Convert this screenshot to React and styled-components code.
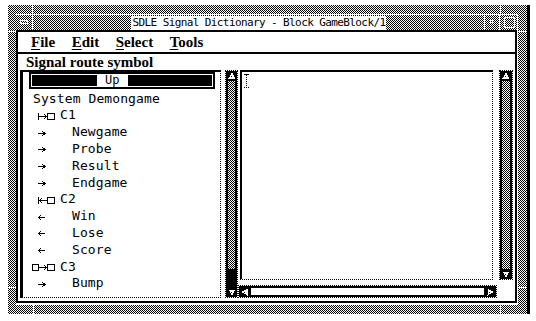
import React from 'react';
import styled, { createGlobalStyle } from 'styled-components';

const dither = `repeating-conic-gradient(#000 0% 25%, #fff 0% 50%) 0 0 / 2px 2px`;

const Global = createGlobalStyle`
  html, body { margin: 0; padding: 0; background: #fff; }
  body { width: 536px; height: 321px; overflow: hidden; }
  * { box-sizing: border-box; }
`;

const Page = styled.div`
  padding: 5px 0 0 8px;
`;

const Window = styled.div`
  position: relative;
  width: 522px;
  height: 309px;
  background: ${dither};
  border-right: 3px solid #000;
  padding: 9px 9px 9px 8px;
  display: flex;
`;

const Mark = styled.span`
  position: absolute;
  background: #fff;
  left: ${p => p.$x}px;
  top: ${p => p.$y}px;
  width: ${p => p.$w}px;
  height: ${p => p.$h}px;
`;

const Inner = styled.div`
  flex: 1;
  display: flex;
  flex-direction: column;
  background: #fff;
`;

const TitleBar = styled.div`
  height: 18px;
  margin-right: 1px;
  border-top: 1px solid #fff;
  border-bottom: 2px solid #000;
  background: ${dither};
  display: flex;
`;

const TitleButton = styled.div`
  position: relative;
  width: ${p => p.$w}px;
  border-left: ${p => (p.$left ? '1px solid #fff' : 'none')};
  border-right: ${p => (p.$right ? '1px solid #fff' : 'none')};
  display: flex;
  align-items: flex-start;
  justify-content: flex-start;
`;

const TitleArea = styled.div`
  flex: 1;
  display: flex;
  justify-content: center;
  align-items: flex-end;
`;

const TitleText = styled.span`
  background: #fff;
  font-family: "DejaVu Sans Mono", monospace;
  font-size: 11px;
  letter-spacing: -0.6px;
  line-height: 14px;
  height: 14px;
  padding: 0 1px 0 2px;
  color: #000;
  white-space: pre;
`;

const Main = styled.div`
  flex: 1;
  display: flex;
  flex-direction: column;
  border-left: 2px solid #000;
  border-right: 2px solid #000;
  border-bottom: 2px solid #000;
  margin: 0 1px 2px 0;
  padding-bottom: 3px;
`;

const MenuBar = styled.div`
  height: 22px;
  border-bottom: 2px solid #000;
  padding: 1px 0 0 13px;
  display: flex;
  gap: 16.5px;
  font-family: "Liberation Serif", "Times New Roman", serif;
  font-weight: bold;
  font-size: 15px;
  line-height: 19px;
  color: #000;
`;

const MenuItem = styled.span`
  u { text-decoration-thickness: 1px; text-underline-offset: 2px; }
`;

const Label = styled.div`
  height: 16px;
  padding-left: 8px;
  font-family: "Liberation Serif", "Times New Roman", serif;
  font-weight: bold;
  font-size: 15px;
  line-height: 16px;
  color: #000;
`;

const ContentRow = styled.div`
  height: 228px;
  padding-left: 2px;
  display: flex;
`;

const ListBox = styled.div`
  width: 201px;
  height: 228px;
  border-top: 2px solid #000;
  border-left: 3px solid #000;
  border-right: 1px dotted #000;
  border-bottom: 1px dotted #000;
  overflow: hidden;
  display: flex;
  flex-direction: column;
`;

const UpButton = styled.div`
  height: 17px;
  margin: 0 5px 0 6px;
  border: 2px solid #000;
  padding: 1px;
  background: #fff;
  flex: none;
`;

const UpBar = styled.div`
  height: 100%;
  background: #000;
  display: flex;
  align-items: stretch;
`;

const UpLabel = styled.span`
  margin-left: 65px;
  background: #fff;
  padding: 0 9px 0 8px;
  font-family: "DejaVu Sans Mono", monospace;
  font-size: 12px;
  line-height: 11px;
  color: #000;
`;

const Rows = styled.div`
  padding-top: 1.6px;
  display: flex;
  flex-direction: column;
`;

const Row = styled.div`
  height: 16.8px;
  display: flex;
  align-items: center;
  padding-left: ${p => p.$indent}px;
  font-family: "DejaVu Sans Mono", monospace;
  font-size: 13px;
  line-height: 16.8px;
  letter-spacing: 0.1px;
  color: #000;
  white-space: pre;
`;

const RowIcon = styled.svg`
  flex: none;
  margin-right: ${p => p.$gap}px;
  margin-top: 1px;
`;

const VScroll = styled.div`
  width: ${p => p.$w}px;
  height: ${p => p.$h}px;
  margin-left: ${p => p.$ml}px;
  border: 1px dotted #000;
  display: flex;
  flex-direction: column;
  flex: none;
`;

const HScroll = styled.div`
  width: 259px;
  height: 13px;
  margin: 5px 0 0 -2px;
  border: 1px dotted #000;
  display: flex;
`;

const ArrowBox = styled.div`
  flex: none;
  width: ${p => p.$w || 'auto'};
  height: ${p => p.$h || 'auto'};
  background: #000;
  display: flex;
  align-items: center;
  justify-content: center;
`;

const VTrack = styled.div`
  flex: 1;
  border-left: 2px solid #000;
  border-right: 2px solid #000;
  background: ${dither};
`;

const HTrack = styled.div`
  flex: 1;
  border-top: 2px solid #000;
  border-bottom: 2px solid #000;
  background: #fff;
`;

const Thumb = styled.div`
  flex: none;
  height: ${p => p.$h}px;
  background: #000;
`;

const RightPane = styled.div`
  width: 273px;
  margin-left: 2px;
  display: flex;
  flex-direction: column;
`;

const TopRow = styled.div`
  height: 210px;
  display: flex;
`;

const TextArea = styled.div`
  width: 253px;
  height: 210px;
  border-top: 2px solid #000;
  border-left: 2px solid #000;
  border-right: 1px dotted #000;
  border-bottom: 1px dotted #000;
  background: #fff;
  padding: 2px 0 0 2px;
`;

const Arrow = ({ dir }) => {
  const pts = {
    up: '5,1.5 8.5,7.5 1.5,7.5',
    down: '1.5,2.5 8.5,2.5 5,8.5',
    left: '1.5,5 7.5,1.5 7.5,8.5',
    right: '8.5,5 2.5,1.5 2.5,8.5',
  }[dir];
  return (
    <svg width="10" height="10" viewBox="0 0 10 10" shapeRendering="crispEdges">
      <polygon points={pts} fill="#fff" />
      <rect x="4" y="5" width="1" height="1" fill="#000" />
    </svg>
  );
};

const SigArrow = ({ dir }) => (
  <RowIcon $gap={26} width="8" height="7" viewBox="0 0 8 7" shapeRendering="crispEdges">
    <line x1="0" y1="3.5" x2="7" y2="3.5" stroke="#000" strokeWidth="1" />
    {dir === 'right' ? (
      <polyline points="4,1 7,3.5 4,6" fill="none" stroke="#000" strokeWidth="1" />
    ) : (
      <polyline points="3,1 0.5,3.5 3,6" fill="none" stroke="#000" strokeWidth="1" />
    )}
  </RowIcon>
);

const ChanIcon = ({ kind }) => (
  <RowIcon $gap={5} width="23" height="9" viewBox="0 0 23 9" shapeRendering="crispEdges">
    {kind === 'both' ? (
      <rect x="0.5" y="1.5" width="6" height="6" fill="none" stroke="#000" />
    ) : (
      <line x1="6.5" y1="1" x2="6.5" y2="8" stroke="#000" />
    )}
    <line x1="7" y1="4.5" x2="15" y2="4.5" stroke="#000" />
    {kind === 'in' ? (
      <polyline points="10,2 7.5,4.5 10,7" fill="none" stroke="#000" />
    ) : (
      <polyline points="12,2 14.5,4.5 12,7" fill="none" stroke="#000" />
    )}
    <rect x="15.5" y="1.5" width="7" height="6" fill="none" stroke="#000" />
  </RowIcon>
);

const items = [
  { t: 'head', label: 'System Demongame' },
  { t: 'chan', kind: 'out', label: 'C1' },
  { t: 'sig', dir: 'right', label: 'Newgame' },
  { t: 'sig', dir: 'right', label: 'Probe' },
  { t: 'sig', dir: 'right', label: 'Result' },
  { t: 'sig', dir: 'right', label: 'Endgame' },
  { t: 'chan', kind: 'in', label: 'C2' },
  { t: 'sig', dir: 'left', label: 'Win' },
  { t: 'sig', dir: 'left', label: 'Lose' },
  { t: 'sig', dir: 'left', label: 'Score' },
  { t: 'chan', kind: 'both', label: 'C3' },
  { t: 'sig', dir: 'right', label: 'Bump' },
];

const marks = [
  [24, 0, 1, 9], [0, 26, 8, 1], [492, 0, 1, 9], [510, 26, 9, 1],
  [25, 300, 1, 9], [0, 282, 8, 1], [492, 300, 1, 9], [510, 282, 9, 1],
];

export default function App() {
  return (
    <>
      <Global />
      <Page>
        <Window>
          {marks.map(([x, y, w, h], i) => (
            <Mark key={i} $x={x} $y={y} $w={w} $h={h} />
          ))}
          <Inner>
            <TitleBar>
              <TitleButton $w={17} $right>
                <svg width="16" height="15" viewBox="0 0 16 15" shapeRendering="crispEdges">
                  <rect x="4.5" y="5.5" width="7" height="3" fill="none" stroke="#fff" />
                </svg>
              </TitleButton>
              <TitleArea>
                <TitleText>SDLE Signal Dictionary - Block GameBlock/1</TitleText>
              </TitleArea>
              <TitleButton $w={15} $left>
                <svg width="14" height="15" viewBox="0 0 14 15" shapeRendering="crispEdges">
                  <rect x="5" y="5" width="3" height="3" fill="#fff" />
                  <rect x="6" y="6" width="1" height="1" fill="#000" />
                </svg>
              </TitleButton>
              <TitleButton $w={18} $left>
                <svg width="17" height="15" viewBox="0 0 17 15" shapeRendering="crispEdges">
                  <rect x="4.5" y="2.5" width="10" height="10" fill="none" stroke="#fff" />
                </svg>
              </TitleButton>
            </TitleBar>
            <Main>
              <MenuBar>
                <MenuItem><u>F</u>ile</MenuItem>
                <MenuItem><u>E</u>dit</MenuItem>
                <MenuItem><u>S</u>elect</MenuItem>
                <MenuItem><u>T</u>ools</MenuItem>
              </MenuBar>
              <Label>Signal route symbol</Label>
              <ContentRow>
                <ListBox>
                  <UpButton>
                    <UpBar>
                      <UpLabel>Up</UpLabel>
                    </UpBar>
                  </UpButton>
                  <Rows>
                    {items.map((it, i) => {
                      if (it.t === 'head') return <Row key={i} $indent={10}>{it.label}</Row>;
                      if (it.t === 'chan')
                        return (
                          <Row key={i} $indent={9}>
                            <ChanIcon kind={it.kind} />
                            {it.label}
                          </Row>
                        );
                      return (
                        <Row key={i} $indent={15}>
                          <SigArrow dir={it.dir} />
                          {it.label}
                        </Row>
                      );
                    })}
                  </Rows>
                </ListBox>
                <VScroll $w={13} $h={228} $ml={4}>
                  <ArrowBox $h="10px"><Arrow dir="up" /></ArrowBox>
                  <VTrack />
                  <Thumb $h={18} />
                  <ArrowBox $h="10px"><Arrow dir="down" /></ArrowBox>
                </VScroll>
                <RightPane>
                  <TopRow>
                    <TextArea>
                      <svg width="6" height="14" viewBox="0 0 6 14" shapeRendering="crispEdges">
                        <rect x="0" y="0" width="5" height="1" fill="#000" />
                        <rect x="2" y="1" width="1" height="1" fill="#000" />
                        <rect x="2" y="3" width="1" height="1" fill="#000" />
                        <rect x="2" y="5" width="1" height="1" fill="#000" />
                        <rect x="2" y="7" width="1" height="1" fill="#000" />
                        <rect x="2" y="9" width="1" height="1" fill="#000" />
                        <rect x="2" y="11" width="1" height="1" fill="#000" />
                        <rect x="0" y="13" width="1" height="1" fill="#000" />
                        <rect x="2" y="13" width="1" height="1" fill="#000" />
                        <rect x="4" y="13" width="1" height="1" fill="#000" />
                      </svg>
                    </TextArea>
                    <VScroll $w={14} $h={210} $ml={6}>
                      <ArrowBox $h="10px"><Arrow dir="up" /></ArrowBox>
                      <VTrack />
                      <ArrowBox $h="10px"><Arrow dir="down" /></ArrowBox>
                    </VScroll>
                  </TopRow>
                  <HScroll>
                    <ArrowBox $w="12px"><Arrow dir="left" /></ArrowBox>
                    <HTrack />
                    <ArrowBox $w="12px"><Arrow dir="right" /></ArrowBox>
                  </HScroll>
                </RightPane>
              </ContentRow>
            </Main>
          </Inner>
        </Window>
      </Page>
    </>
  );
}
